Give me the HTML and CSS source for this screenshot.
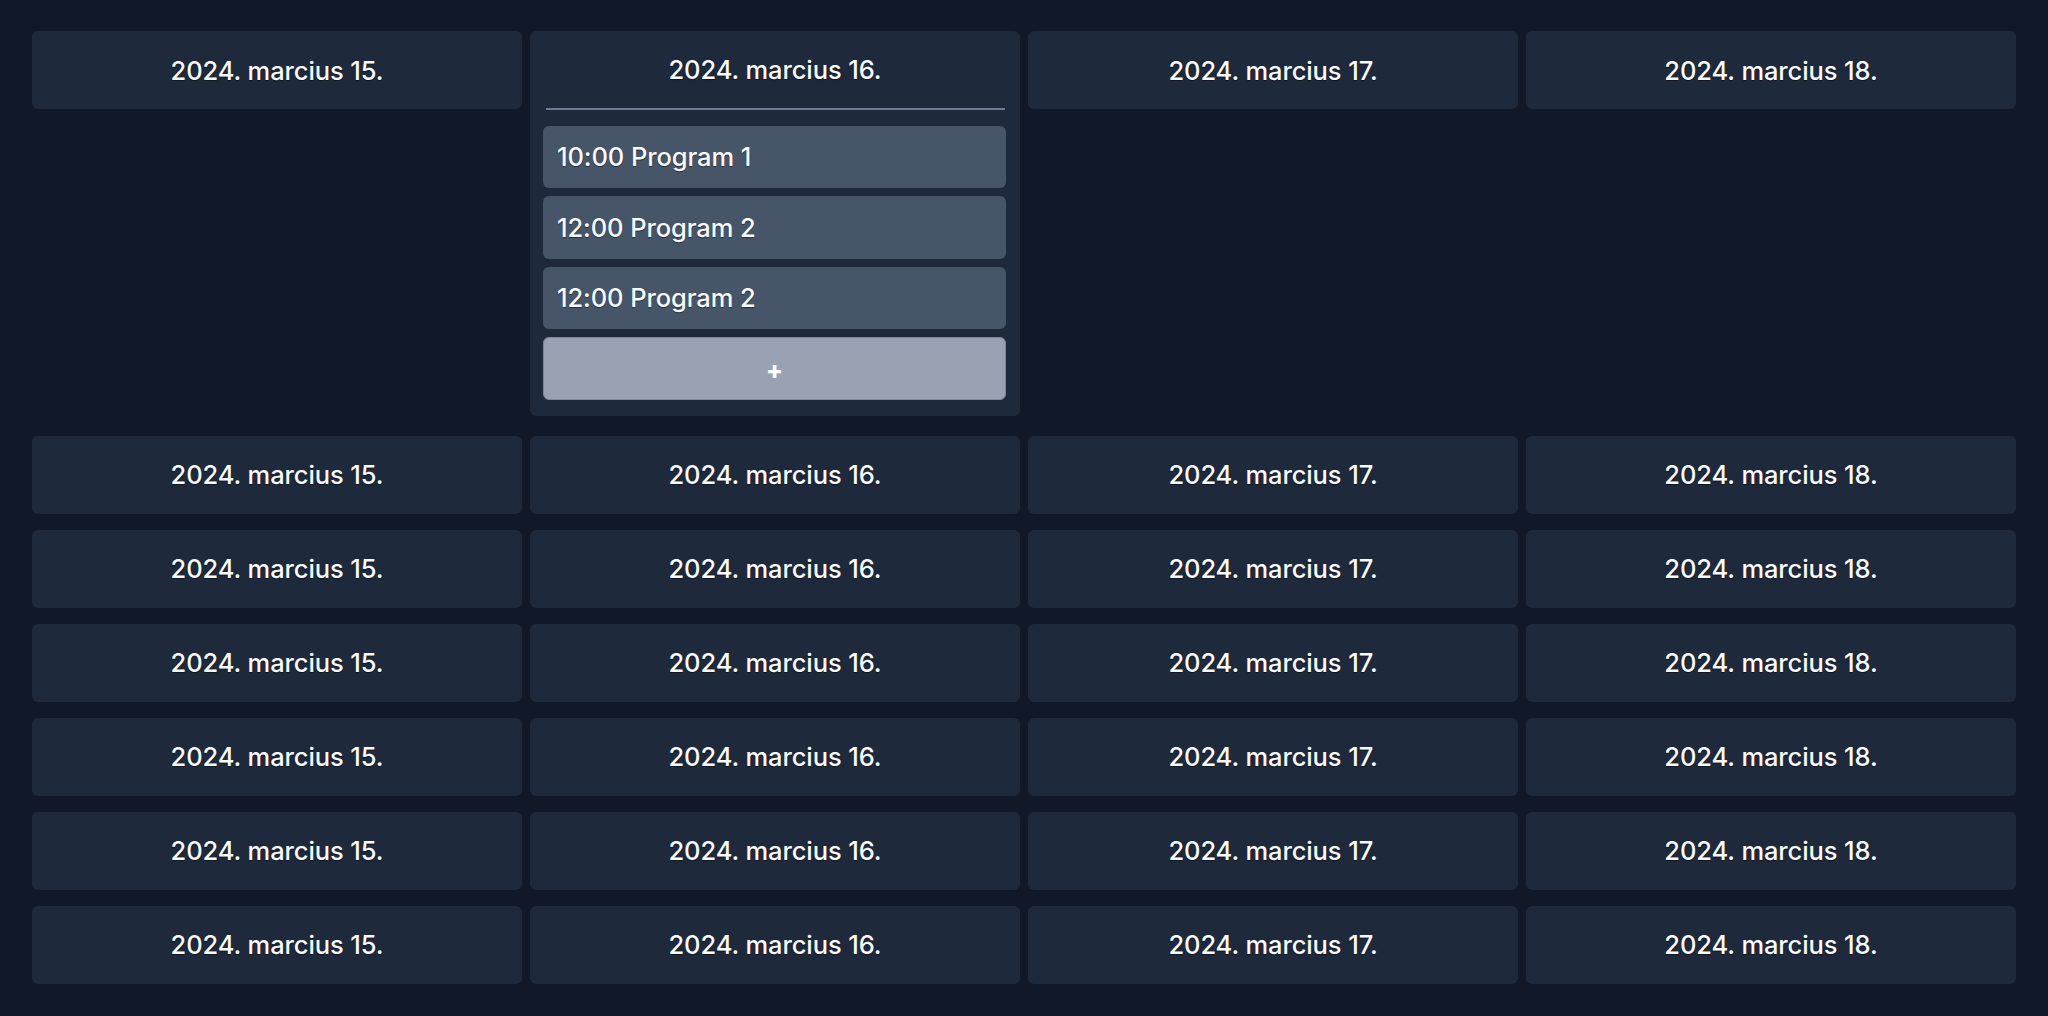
FILE: index.html
```html
<!DOCTYPE html>
<html lang="hu">
<head>
<meta charset="utf-8">
<title>Naptár</title>
<link rel="stylesheet" href="styles.css">
</head>
<body>
<main class="calendar">
  <section class="week week-first">
    <div class="day"><div class="day-head">2024. marcius 15.</div></div>
    <div class="day day-open">
      <div class="day-head">2024. marcius 16.</div>
      <hr class="day-rule">
      <div class="events">
        <div class="event">10:00 Program 1</div>
        <div class="event">12:00 Program 2</div>
        <div class="event">12:00 Program 2</div>
        <button class="add-btn" type="button">+</button>
      </div>
    </div>
    <div class="day"><div class="day-head">2024. marcius 17.</div></div>
    <div class="day"><div class="day-head">2024. marcius 18.</div></div>
  </section>
  <section class="week">
    <div class="day"><div class="day-head">2024. marcius 15.</div></div>
    <div class="day"><div class="day-head">2024. marcius 16.</div></div>
    <div class="day"><div class="day-head">2024. marcius 17.</div></div>
    <div class="day"><div class="day-head">2024. marcius 18.</div></div>
  </section>
  <section class="week">
    <div class="day"><div class="day-head">2024. marcius 15.</div></div>
    <div class="day"><div class="day-head">2024. marcius 16.</div></div>
    <div class="day"><div class="day-head">2024. marcius 17.</div></div>
    <div class="day"><div class="day-head">2024. marcius 18.</div></div>
  </section>
  <section class="week">
    <div class="day"><div class="day-head">2024. marcius 15.</div></div>
    <div class="day"><div class="day-head">2024. marcius 16.</div></div>
    <div class="day"><div class="day-head">2024. marcius 17.</div></div>
    <div class="day"><div class="day-head">2024. marcius 18.</div></div>
  </section>
  <section class="week">
    <div class="day"><div class="day-head">2024. marcius 15.</div></div>
    <div class="day"><div class="day-head">2024. marcius 16.</div></div>
    <div class="day"><div class="day-head">2024. marcius 17.</div></div>
    <div class="day"><div class="day-head">2024. marcius 18.</div></div>
  </section>
  <section class="week">
    <div class="day"><div class="day-head">2024. marcius 15.</div></div>
    <div class="day"><div class="day-head">2024. marcius 16.</div></div>
    <div class="day"><div class="day-head">2024. marcius 17.</div></div>
    <div class="day"><div class="day-head">2024. marcius 18.</div></div>
  </section>
  <section class="week">
    <div class="day"><div class="day-head">2024. marcius 15.</div></div>
    <div class="day"><div class="day-head">2024. marcius 16.</div></div>
    <div class="day"><div class="day-head">2024. marcius 17.</div></div>
    <div class="day"><div class="day-head">2024. marcius 18.</div></div>
  </section>
</main>
</body>
</html>
```
FILE: styles.css
```css
html, body {
  margin: 0;
  padding: 0;
  background: #111827;
  height: 100%;
}
body {
  font-family: Inter, "Liberation Sans", sans-serif;
  color: #f8fafc;
}
.calendar {
  padding: 31px 32px 0 32px;
  display: flex;
  flex-direction: column;
  gap: 16px;
}
.week {
  display: grid;
  grid-template-columns: repeat(4, 1fr);
  column-gap: 8px;
  align-items: start;
}
.week-first {
  margin-bottom: 4px;
}
.day {
  background: #1e293b;
  border-radius: 6px;
}
.day-head {
  height: 78px;
  display: flex;
  align-items: center;
  justify-content: center;
  font-size: 25.5px;
  font-weight: 500;
  letter-spacing: -0.1px;
  text-shadow: 0 1px 1px rgba(0,0,0,0.45);
}
.day-open .day-head {
  height: 77px;
}
.day-rule {
  margin: 0 15px 0 16px;
  border: 0;
  height: 1.5px;
  background: #6b7a90;
}
.events {
  padding: 16px 14px 16px 13px;
  display: flex;
  flex-direction: column;
  gap: 8px;
}
.event {
  height: 62.5px;
  box-sizing: border-box;
  background: #475569;
  border-radius: 6px;
  display: flex;
  align-items: center;
  padding-left: 14px;
  font-size: 25.5px;
  font-weight: 500;
  letter-spacing: -0.1px;
  text-shadow: 0 1px 1px rgba(0,0,0,0.45);
}
.add-btn {
  height: 62.5px;
  box-sizing: border-box;
  background: #98a2b3;
  border: 1px solid #7c8799;
  border-radius: 6px;
  color: #ffffff;
  font-family: Inter, "Liberation Sans", sans-serif;
  font-weight: 800;
  font-size: 25px;
  padding: 4px 0 0 0;
  cursor: pointer;
}
```
